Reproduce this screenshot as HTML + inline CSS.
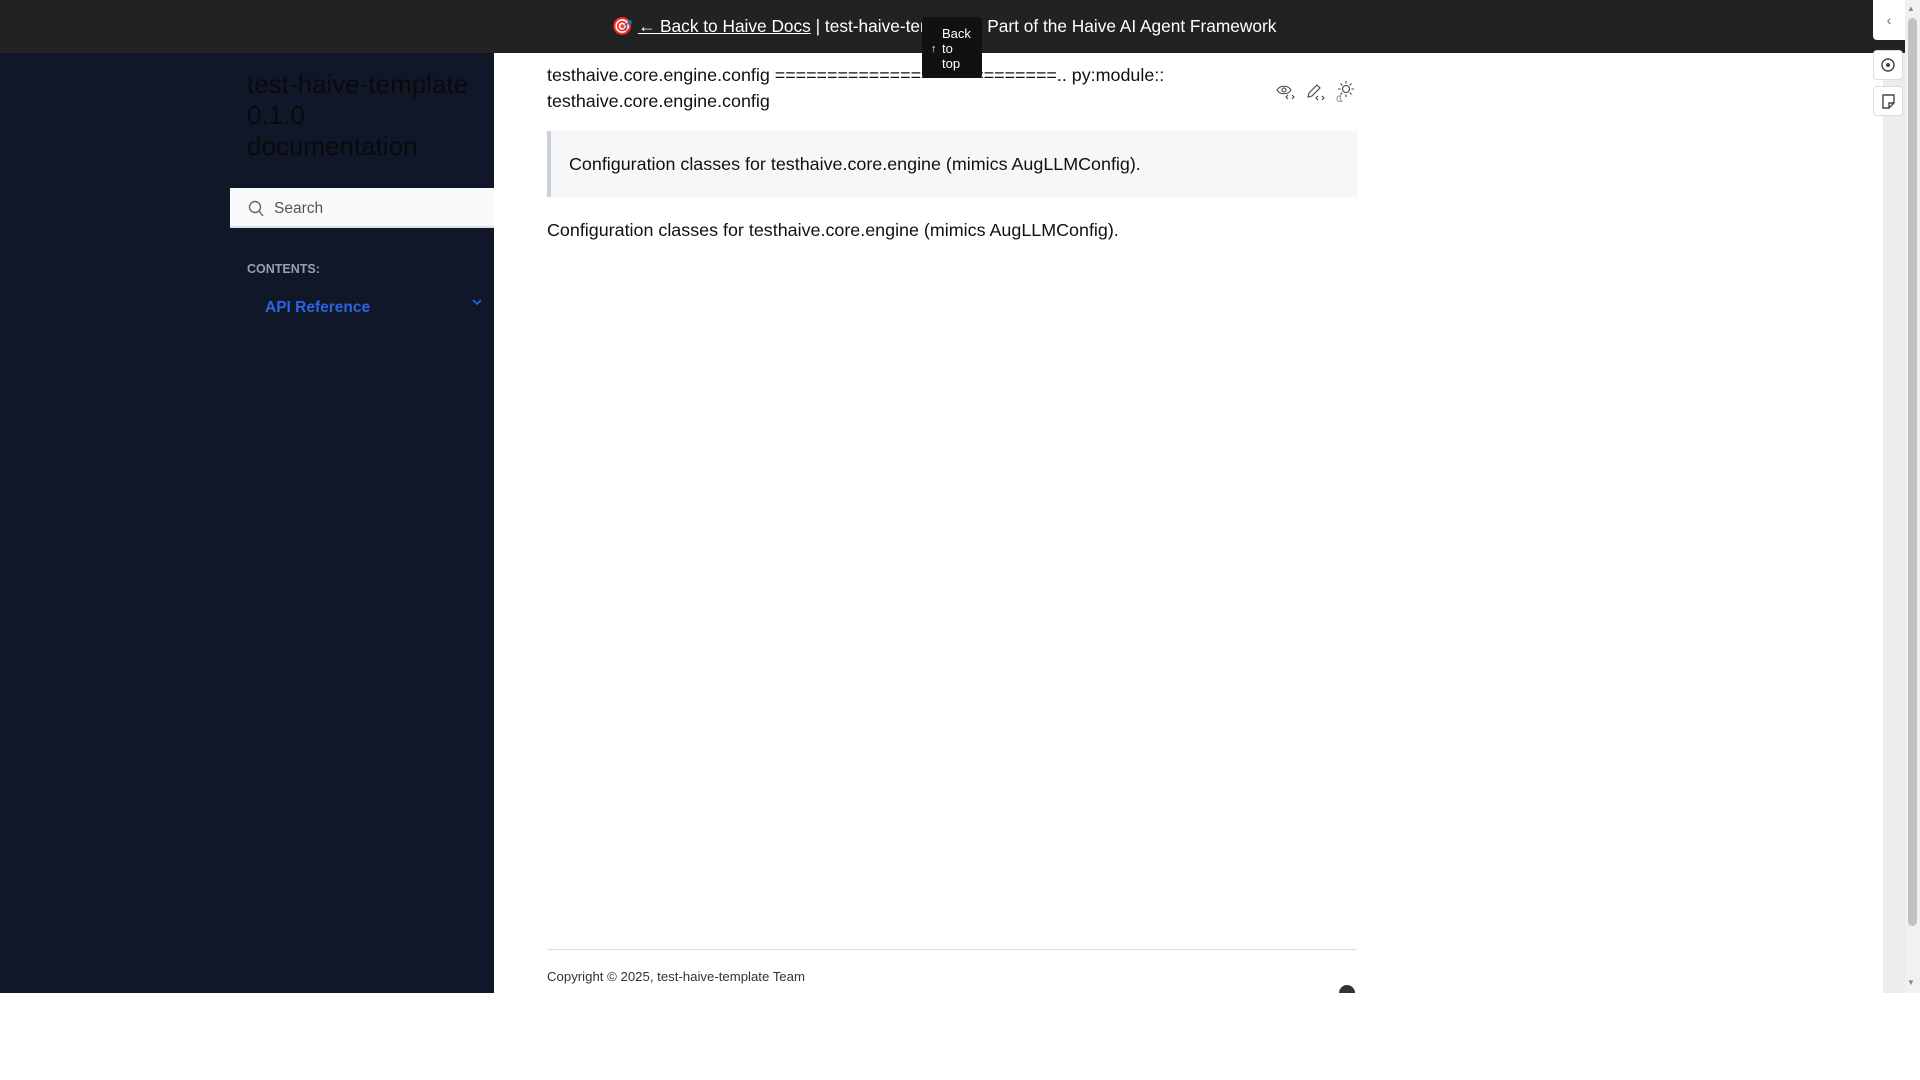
<!DOCTYPE html>
<html><head><meta charset="utf-8"><style>
*{box-sizing:border-box;margin:0;padding:0}
body{width:1920px;height:1080px;background:#fff;font-family:"Liberation Sans",Arial,sans-serif;position:relative;overflow:hidden;color:#111}
.top{position:absolute;left:0;top:0;width:1920px;height:53px;background:#222;color:#fff;font-size:17.3px;text-align:center;line-height:52px;padding-right:32px}
.top a{color:#fff;text-decoration:underline}
.side{position:absolute;left:0;top:53px;width:494px;height:940px;background:#0f1729}
.title{position:absolute;left:247px;top:16px;font-size:26px;line-height:31px;color:#0a0a0a}
.search{position:absolute;left:230px;top:135px;width:264px;height:40px;background:#f8f9fb;border-bottom:2px solid #dde;font-size:15.5px;color:#555;line-height:42px;padding-left:44px}
.search svg{position:absolute;left:18px;top:12px}
.cont{position:absolute;left:247px;top:209px;font-size:12.5px;color:#9aa0aa;font-weight:bold}
.api{position:absolute;left:265px;top:246px;font-size:15.5px;font-weight:bold;color:#2b64e3}
.chev{position:absolute;left:471px;top:244px}
.main{position:absolute;left:547px;top:53px;width:810px}
.h{font-size:17.9px;line-height:26px;margin-top:9px}
.bq{margin-top:17px;height:66px;background:#f6f7f9;border-left:4px solid #cdd1db;font-size:17.9px;line-height:66px;padding-left:18px}
.p{font-size:17.9px;margin-top:23px}
.hr{position:absolute;left:547px;top:949px;width:810px;border-top:1px solid #ddd}
.copy{position:absolute;left:547px;top:969px;font-size:13.2px;color:#333}
.ttip{position:absolute;left:922px;top:17px;width:60px;height:61px;background:#111;color:#fff;font-size:13px;line-height:15px;padding:9px 0 0 20px;border-radius:3px}
.ttip span{position:absolute;left:9px;top:25px;font-size:11px}
.rpanel{position:absolute;left:1883px;top:53px;width:22px;height:940px;background:#ececec}
.sb{position:absolute;left:1905px;top:0;width:15px;height:993px;background:#f1f1f1}
.thumb{position:absolute;left:1908px;top:18px;width:9px;height:908px;background:#c1c1c1;border-radius:5px}
.tab{position:absolute;left:1873px;top:0;width:32px;height:40px;background:#fff;border-radius:0 0 0 4px;font-size:14px;color:#666;text-align:center;line-height:40px}
.btn{position:absolute;left:1873px;width:30px;height:30px;background:#fff;border:1px solid #ddd;border-radius:4px}
</style></head><body>
<div class="top">🎯 <a>← Back to Haive Docs</a> | test-haive-template - Part of the Haive AI Agent Framework</div>
<div class="ttip">Back<br>to<br>top<span>↑</span></div>
<div class="side">
<div class="title">test-haive-template<br>0.1.0<br>documentation</div>
<div class="search"><svg width="16" height="18" viewBox="0 0 16 18"><circle cx="7" cy="7" r="5.5" fill="none" stroke="#666" stroke-width="1.4"/><path d="M11 11l4 5" stroke="#666" stroke-width="1.4"/></svg>Search</div>
<div class="cont">CONTENTS:</div>
<div class="api">API Reference</div>
<svg class="chev" width="12" height="10" viewBox="0 0 12 10"><path d="M2 3l4 4 4-4" fill="none" stroke="#2b64e3" stroke-width="1.6"/></svg>
</div>
<div class="main">
<div class="h">testhaive.core.engine.config ===========================.. py:module::<br>testhaive.core.engine.config</div>
<div class="bq">Configuration classes for testhaive.core.engine (mimics AugLLMConfig).</div>
<div class="p">Configuration classes for testhaive.core.engine (mimics AugLLMConfig).</div>
</div>
<svg style="position:absolute;left:1275px;top:80px" width="85" height="22" viewBox="0 0 85 22" fill="none" stroke="#444" stroke-width="1.1">
<path d="M2 10c3-5 11-5 14 0c-3 5-11 5-14 0z"/><circle cx="9" cy="10" r="2"/><path d="M13 15l-2 2 2 2M17 15l2 2-2 2"/>
<path d="M33 17l1-4 8-8 3 3-8 8z"/><path d="M43 16l-2 2 2 2M47 16l2 2-2 2"/>
<circle cx="71" cy="9" r="3.5"/><path d="M71 1v2.5M71 14.5v2.5M63 9h2.5M76.5 9h2.5M65.5 3.5l1.8 1.8M74.7 12.7l1.8 1.8M65.5 14.5l1.8-1.8M74.7 5.3l1.8-1.8"/><path d="M66 16a3 3 0 1 0 1 5a3 3 0 0 1-1-5z" stroke="#999"/>
</svg>
<div class="hr"></div>
<div class="copy">Copyright © 2025, test-haive-template Team</div>
<svg style="position:absolute;left:1337px;top:982px" width="20" height="11" viewBox="0 0 20 11"><path d="M2 11a8 8 0 0 1 16 0z" fill="#333"/></svg>
<div style="position:absolute;left:0;top:993px;width:1920px;height:87px;background:#fff"></div>
<div class="rpanel"></div>
<div class="sb"></div><div class="thumb"></div>
<div style="position:absolute;left:1907px;top:4px;font-size:8px;color:#888">▲</div>
<div style="position:absolute;left:1907px;top:978px;font-size:8px;color:#888">▼</div>
<div class="tab">‹</div>
<div class="btn" style="top:50px"><svg width="30" height="30" viewBox="0 0 30 30"><circle cx="14" cy="14" r="6" fill="none" stroke="#444" stroke-width="1.4"/><circle cx="14" cy="14" r="2" fill="#444"/></svg></div>
<div class="btn" style="top:86px"><svg width="30" height="30" viewBox="0 0 30 30"><path d="M9 8h11v8l-5 5h-6z M15 21v-5h5" fill="none" stroke="#444" stroke-width="1.4"/></svg></div>
</body></html>
